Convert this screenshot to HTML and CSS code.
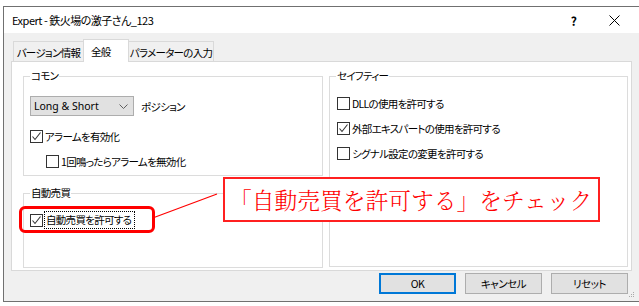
FILE: index.html
```html
<!DOCTYPE html>
<html lang="ja">
<head>
<meta charset="utf-8">
<title>Expert</title>
<link rel="stylesheet" href="styles.css">
</head>
<body>
<div class="window">
  <div class="titlebar">
    <span class="title">Expert - 鉄火場の激子さん_123</span>
    <span class="help">?</span>
    <svg class="close" width="11" height="11" viewBox="0 0 11 11"><path d="M0.5 0.5 L10.5 10.5 M10.5 0.5 L0.5 10.5" stroke="#000" stroke-width="1" fill="none"/></svg>
  </div>
  <div class="client">
    <div class="tabs">
      <div class="tab tab-info">バージョン情報</div>
      <div class="tab tab-general active">全般</div>
      <div class="tab tab-params">パラメーターの入力</div>
    </div>
    <div class="panel">
      <div class="col-left">
        <fieldset class="group g-common">
          <legend>コモン</legend>
          <div class="combo-row">
            <div class="combo"><span>Long &amp; Short</span><svg class="chev" width="9" height="5" viewBox="0 0 9 5"><path d="M0.5 0.5 L4.5 4.5 L8.5 0.5" stroke="#606060" fill="none"/></svg></div>
            <span class="combo-label">ポジション</span>
          </div>
          <div class="check first"><span class="box"><svg width="11" height="11" viewBox="0 0 11 11"><path d="M1.5 5.5 L4 8.5 L9.5 1.5" stroke="#333" stroke-width="1.1" fill="none"/></svg></span><span>アラームを有効化</span></div>
          <div class="check indent"><span class="box"></span><span>1回鳴ったらアラームを無効化</span></div>
        </fieldset>
        <fieldset class="group g-auto">
          <legend>自動売買</legend>
          <div class="check"><span class="box"><svg width="11" height="11" viewBox="0 0 11 11"><path d="M1.5 5.5 L4 8.5 L9.5 1.5" stroke="#333" stroke-width="1.1" fill="none"/></svg></span><span class="focus">自動売買を許可する</span></div>
        </fieldset>
      </div>
      <fieldset class="group g-safety">
        <legend>セイフティー</legend>
        <div class="check"><span class="box"></span><span>DLLの使用を許可する</span></div>
        <div class="check"><span class="box"><svg width="11" height="11" viewBox="0 0 11 11"><path d="M1.5 5.5 L4 8.5 L9.5 1.5" stroke="#333" stroke-width="1.1" fill="none"/></svg></span><span>外部エキスパートの使用を許可する</span></div>
        <div class="check"><span class="box"></span><span>シグナル設定の変更を許可する</span></div>
      </fieldset>
    </div>
    <div class="buttons">
      <button class="btn default">OK</button>
      <button class="btn">キャンセル</button>
      <button class="btn">リセット</button>
    </div>
  </div>
  <svg class="grip" width="7" height="7" viewBox="0 0 7 7"><rect x="5" y="0" width="1" height="1" fill="#aaa"/><rect x="3" y="2" width="1" height="1" fill="#aaa"/><rect x="5" y="2" width="1" height="1" fill="#aaa"/><rect x="1" y="4" width="1" height="1" fill="#aaa"/><rect x="3" y="4" width="1" height="1" fill="#aaa"/><rect x="5" y="4" width="1" height="1" fill="#aaa"/></svg>
</div>

<div class="annot-rect"></div>
<svg class="annot-line" width="639" height="306" viewBox="0 0 639 306"><line x1="154" y1="217.5" x2="217" y2="194" stroke="#ff0000" stroke-width="1.2"/></svg>
<div class="callout">「自動売買を許可する」をチェック</div>
</body>
</html>
```

FILE: styles.css
```css
* { box-sizing: border-box; }
html, body { margin: 0; padding: 0; }
body {
  background: #fff;
  width: 639px;
  height: 306px;
  overflow: hidden;
  position: relative;
  font-family: "Noto Sans CJK JP", "Noto Sans", sans-serif;
  font-size: 10.5px;
  letter-spacing: -0.7px;
  color: #000;
  font-feature-settings: "palt";
}
.window {
  margin: 6px 0 0 3px;
  width: 636px;
  height: 296px;
  border: 1px solid #707070;
  border-right: none;
  display: flex;
  flex-direction: column;
  position: relative;
}
.titlebar {
  height: 26px;
  flex: none;
  background: #fff;
  display: flex;
  align-items: center;
  padding: 0 19px 0 8px;
}
.title { font-size: 11px; letter-spacing: -0.5px; }
.help { margin-left: auto; margin-right: 32px; font-size: 12px; font-weight: bold; letter-spacing: 0; }
.close { display: block; }
.client {
  flex: 1;
  background: #f0f0f0;
  padding: 6px 0 0 7px;
}
.tabs {
  height: 22px;
  display: flex;
  align-items: flex-end;
  padding-left: 2px;
}
.tab {
  height: 20px;
  border: 1px solid #d9d9d9;
  border-bottom: none;
  background: #f0f0f0;
  display: flex;
  align-items: center;
  justify-content: center;
  white-space: nowrap;
  padding-top: 1px;
}
.tab-info { width: 71px; }
.tab-general { width: 46px; margin-left: -1px; justify-content: flex-start; padding-left: 7px; }
.tab-params { width: 86px; margin-left: -1px; }
.tab.active {
  height: 23px;
  margin-bottom: -1px;
  background: #fff;
  position: relative;
  z-index: 1;
  padding-top: 0;
}
.panel {
  width: 621px;
  height: 210px;
  border: 1px solid #d9d9d9;
  background: #fff;
  display: grid;
  grid-template-columns: 300px 299px;
  column-gap: 6px;
  padding: 7px 0 0 11px;
}
.col-left { display: flex; flex-direction: column; }
.group {
  margin: 0;
  min-width: 0;
  border: 1px solid #dcdcdc;
  padding: 0 0 0 6px;
}
.group legend {
  padding: 0 1px;
  line-height: 14px;
}
.g-common { height: 107px; padding-top: 13px; }
.g-auto { height: 82px; margin-top: 10px; padding-top: 11px; }
.g-safety { height: 198px; padding-top: 11px; }
.combo-row { display: flex; align-items: center; height: 20px; }
.combo {
  width: 104px;
  height: 20px;
  background: #e1e1e1;
  border: 1px solid #adadad;
  display: flex;
  align-items: center;
  justify-content: space-between;
  padding: 0 5px 0 3px;
  font-family: "Noto Sans", sans-serif;
  font-size: 10.5px;
  letter-spacing: 0;
  font-feature-settings: normal;
}
.chev { display: block; }
.combo-label { margin-left: 7px; }
.check {
  display: flex;
  align-items: center;
  height: 18px;
  gap: 2px;
  white-space: nowrap;
}
.g-safety .check { margin-left: 1px; }
.g-safety .check + .check { margin-top: 7px; }
.check.first { margin-top: 11px; }
.check.indent { margin-top: 7px; margin-left: 16px; }
.box {
  width: 13px;
  height: 13px;
  border: 1px solid #333;
  background: #fff;
  flex: none;
  display: block;
}
.box svg { display: block; }
.focus {
  outline: 1px dotted #000;
  outline-offset: 0;
  padding: 0 3px 0 1px;
  line-height: 16px;
}
.buttons {
  width: 621px;
  margin-top: 2px;
  display: flex;
  justify-content: flex-end;
  gap: 9px;
  padding-right: 4px;
}
.btn {
  width: 77px;
  height: 21px;
  background: #e1e1e1;
  border: 1px solid #adadad;
  font-family: inherit;
  font-size: 10.5px;
  letter-spacing: -0.5px;
  font-feature-settings: "palt";
  color: #000;
  padding: 0;
  margin: 0;
}
.btn.default {
  border-color: #0078d7;
  box-shadow: inset 0 0 0 1px #0078d7;
}
.grip { position: absolute; right: 4px; bottom: 2px; }

.annot-rect {
  position: absolute;
  left: 19px;
  top: 206px;
  width: 136px;
  height: 27px;
  border: 3px solid #ff0000;
  border-radius: 6px;
}
.annot-line { position: absolute; left: 0; top: 0; pointer-events: none; }
.callout {
  position: absolute;
  left: 223px;
  top: 177px;
  width: 377px;
  height: 45px;
  border: 2px solid #ff2020;
  background: #fff;
  color: #ff0000;
  font-family: "Noto Serif CJK JP", "Noto Sans CJK JP", serif;
  font-weight: 300;
  font-size: 22.75px;
  letter-spacing: 0;
  font-feature-settings: normal;
  display: flex;
  align-items: center;
  padding-left: 4px;
  white-space: nowrap;
}
```
